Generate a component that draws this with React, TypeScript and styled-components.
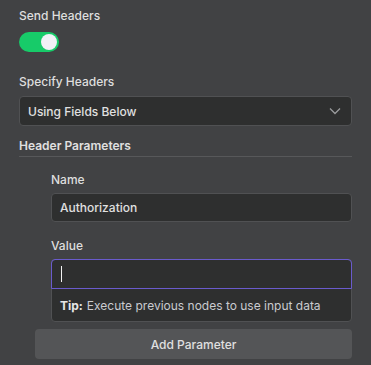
import React from 'react';
import styled, { createGlobalStyle } from 'styled-components';

const GlobalStyle = createGlobalStyle`
  html, body {
    margin: 0;
    padding: 0;
    background: #414244;
  }
  body {
    font-family: Inter, "Noto Sans", sans-serif;
    color: #dadadb;
  }
`;

function App() {
  return (
    <>
      <GlobalStyle />
      <Panel>
        <Field $gap={8}>
          <Label>Send Headers</Label>
          <Toggle>
            <Knob />
          </Toggle>
        </Field>

        <Field $gap={6} $top={22}>
          <Label>Specify Headers</Label>
          <Select>
            <span>Using Fields Below</span>
            <svg width="12" height="8" viewBox="0 0 12 8" fill="none">
              <path d="M1 1.5L6 6.5L11 1.5" stroke="#9a9b9d" strokeWidth="1.3" />
            </svg>
          </Select>
        </Field>

        <SectionTitle>Header Parameters</SectionTitle>

        <Params>
          <Field $gap={5}>
            <Label>Name</Label>
            <Input>Authorization</Input>
          </Field>
          <Field $gap={5} $top={16}>
            <Label>Value</Label>
            <ValueBox>
              <ValueInput>
                <Caret />
              </ValueInput>
              <Tip>
                <b>Tip:</b> Execute previous nodes to use input data
              </Tip>
            </ValueBox>
          </Field>
        </Params>

        <AddButton>Add Parameter</AddButton>
      </Panel>
    </>
  );
}

export default App;

const Panel = styled.div`
  width: 333px;
  padding: 8px 0 0 19px;
  display: flex;
  flex-direction: column;
`;

const Field = styled.div<{ $gap: number; $top?: number }>`
  display: flex;
  flex-direction: column;
  gap: ${({ $gap }) => $gap}px;
  margin-top: ${({ $top }) => $top || 0}px;
`;

const Label = styled.div`
  font-size: 12px;
  font-weight: 500;
  line-height: 16px;
  color: #dedede;
`;

const Toggle = styled.div`
  width: 40px;
  height: 20px;
  border-radius: 10px;
  background: #17cb69;
  display: flex;
  align-items: center;
  justify-content: flex-end;
  padding: 0 2px;
  box-sizing: border-box;
`;

const Knob = styled.div`
  width: 16px;
  height: 16px;
  border-radius: 50%;
  background: #f1f1f7;
`;

const Select = styled.div`
  height: 30px;
  box-sizing: border-box;
  border: 1px solid #505153;
  border-radius: 4px;
  background: #2e2f2f;
  display: flex;
  align-items: center;
  justify-content: space-between;
  padding: 0 10px 0 8px;
  font-size: 12px;
  font-weight: 500;
  color: #e0e0e0;
`;

const SectionTitle = styled.div`
  margin-top: 12px;
  font-size: 12px;
  font-weight: 600;
  line-height: 16px;
  padding-bottom: 2px;
  color: #e0e0e0;
  border-bottom: 1px solid #57585a;
`;

const Params = styled.div`
  padding-left: 32px;
  margin-top: 15px;
  display: flex;
  flex-direction: column;
`;

const Input = styled.div`
  height: 29px;
  box-sizing: border-box;
  border: 1px solid #505153;
  border-radius: 4px;
  background: #2e2f2f;
  display: flex;
  align-items: center;
  padding: 0 8px;
  font-size: 12px;
  font-weight: 500;
  color: #e0e0e0;
`;

const ValueBox = styled.div`
  border: 1px solid #505153;
  border-radius: 4px;
  background: #2e2f2f;
  display: flex;
  flex-direction: column;
`;

const ValueInput = styled.div`
  height: 30px;
  box-sizing: border-box;
  margin: -1px -1px 0;
  border: 1px solid #6a5bcd;
  border-radius: 4px 4px 0 0;
  display: flex;
  align-items: center;
  padding: 0 9px;
`;

const Caret = styled.div`
  width: 1px;
  height: 16px;
  background: #f2f2f2;
`;

const Tip = styled.div`
  height: 32px;
  display: flex;
  align-items: center;
  gap: 4px;
  padding: 0 8px;
  font-size: 12px;
  color: #cacbcf;

  b {
    font-weight: 700;
    color: #e6e6e6;
  }
`;

const AddButton = styled.div`
  margin: 7px 0 0 16px;
  height: 30px;
  border-radius: 4px;
  background: #545557;
  display: flex;
  align-items: center;
  justify-content: center;
  font-size: 12px;
  font-weight: 500;
  color: #e0e0e0;
`;
